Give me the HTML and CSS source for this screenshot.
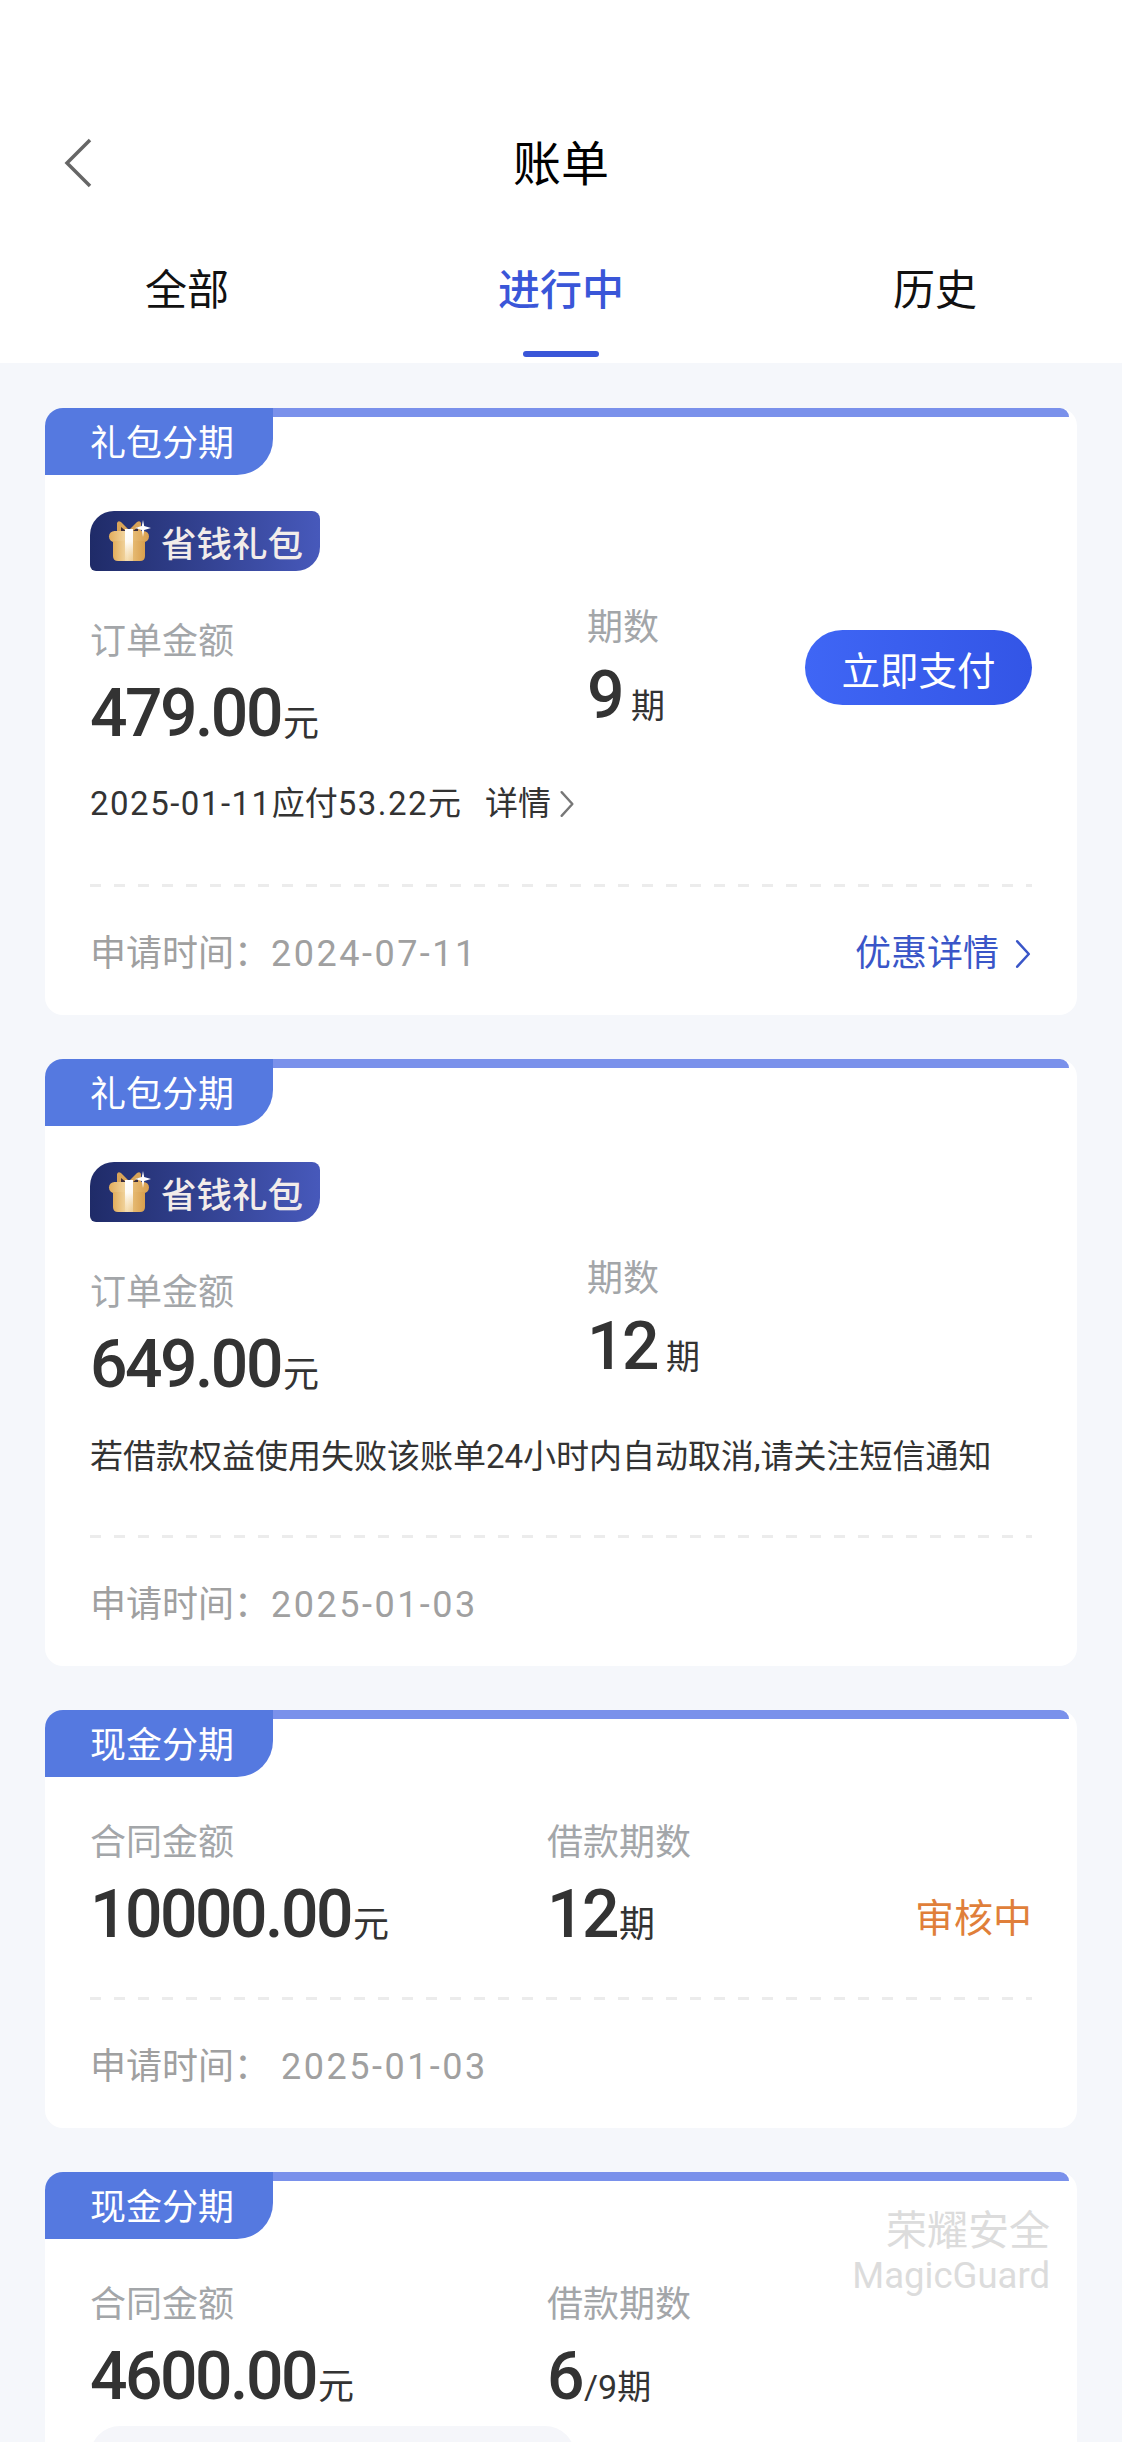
FILE: index.html
```html
<!DOCTYPE html>
<html lang="zh-CN">
<head>
<meta charset="utf-8">
<title>账单</title>
<link rel="stylesheet" href="styles.css">
</head>
<body>
<svg class="defs" width="0" height="0" aria-hidden="true">
  <defs>
    <linearGradient id="boxg" x1="0" y1="0" x2="1" y2="0">
      <stop offset="0" stop-color="#e2ad5c"/><stop offset=".45" stop-color="#f3d9a6"/><stop offset=".6" stop-color="#e6bb74"/><stop offset="1" stop-color="#d99f4d"/>
    </linearGradient>
    <linearGradient id="ribbon" x1="0" y1="0" x2="0" y2="1">
      <stop offset="0" stop-color="#fff"/><stop offset=".4" stop-color="#fff" stop-opacity=".9"/><stop offset="1" stop-color="#f6dfb4" stop-opacity=".5"/>
    </linearGradient>
    <symbol id="gift" viewBox="0 0 44 44">
      <path d="M9 14 L9 4 Q10 1 13 3 L21 11 L29 3 Q32 1 33 4 L33 14 Z" fill="#d9a458"/>
      <path d="M13 8 L18 12 L13 13 Z M30 8 L25 12 L30 13 Z" fill="#3a2c3c"/>
      <rect x="1" y="12" width="40" height="11" rx="5.500" fill="url(#boxg)"/>
      <path d="M5 22 H37 V37 Q37 42 32 42 H10 Q5 42 5 37 Z" fill="url(#boxg)"/>
      <rect x="17" y="10" width="8" height="32" fill="url(#ribbon)"/>
      <path d="M35 1 L36.200 7 L43 9 L36.200 11 L35 18 L33.800 11 L27 9 L33.800 7 Z" fill="#fff"/>
    </symbol>
    <symbol id="chev" viewBox="0 0 14 26">
      <path d="M2 2 L12 13 L2 24" fill="none" stroke="currentColor" stroke-width="2.200" stroke-linecap="round" stroke-linejoin="round"/>
    </symbol>
  </defs>
</svg>

<header class="top">
  <div class="navbar">
    <svg class="back" viewBox="0 0 30 50"><path d="M27 2 L4 25 L27 48" fill="none" stroke="#666" stroke-width="3.500"/></svg>
    <h1 class="title">账单</h1>
  </div>
  <nav class="tabs">
    <div class="tab">全部</div>
    <div class="tab active">进行中</div>
    <div class="tab">历史</div>
  </nav>
</header>

<main class="list">
  <section class="card">
    <div class="card-head"><div class="tag">礼包分期</div><div class="bar"></div></div>
    <div class="card-body">
      <div class="badge"><svg class="gift"><use href="#gift"/></svg><span>省钱礼包</span></div>
      <div class="stats stats-gift">
        <div class="col col-a">
          <div class="label">订单金额</div>
          <div class="amount">479.00<small>元</small></div>
        </div>
        <div class="col col-b">
          <div class="label">期数</div>
          <div class="term">9<small class="gap">期</small></div>
        </div>
        <button class="pay">立即支付</button>
      </div>
      <div class="note"><span class="n">2025-01-11</span>应付<span class="n">53.22</span>元<span class="detail">详情<svg class="chev-s"><use href="#chev"/></svg></span></div>
      <div class="dash"></div>
      <div class="foot">
        <div class="apply">申请时间：<span class="n date">2024-07-11</span></div>
        <div class="promo">优惠详情<svg class="chev-m"><use href="#chev"/></svg></div>
      </div>
    </div>
  </section>

  <section class="card">
    <div class="card-head"><div class="tag">礼包分期</div><div class="bar"></div></div>
    <div class="card-body">
      <div class="badge"><svg class="gift"><use href="#gift"/></svg><span>省钱礼包</span></div>
      <div class="stats stats-gift">
        <div class="col col-a">
          <div class="label">订单金额</div>
          <div class="amount">649.00<small>元</small></div>
        </div>
        <div class="col col-b">
          <div class="label">期数</div>
          <div class="term">12<small class="gap">期</small></div>
        </div>
      </div>
      <div class="note note-long">若借款权益使用失败该账单24小时内自动取消,请关注短信通知</div>
      <div class="dash"></div>
      <div class="foot">
        <div class="apply">申请时间：<span class="n date">2025-01-03</span></div>
      </div>
    </div>
  </section>

  <section class="card">
    <div class="card-head"><div class="tag">现金分期</div><div class="bar"></div></div>
    <div class="card-body">
      <div class="stats stats-cash">
        <div class="col col-c">
          <div class="label">合同金额</div>
          <div class="amount">10000.00<small>元</small></div>
        </div>
        <div class="col">
          <div class="label">借款期数</div>
          <div class="amount">12<small>期</small></div>
        </div>
        <div class="status">审核中</div>
      </div>
      <div class="dash dash-cash"></div>
      <div class="foot">
        <div class="apply">申请时间：<span class="n date wide">2025-01-03</span></div>
      </div>
    </div>
  </section>

  <section class="card">
    <div class="card-head"><div class="tag">现金分期</div><div class="bar"></div></div>
    <div class="card-body">
      <div class="stats stats-cash">
        <div class="col col-c">
          <div class="label">合同金额</div>
          <div class="amount">4600.00<small>元</small></div>
        </div>
        <div class="col">
          <div class="label">借款期数</div>
          <div class="amount">6<small class="frac">/9期</small></div>
        </div>
      </div>
      <div class="pill"></div>
    </div>
    <div class="watermark"><div class="wm-cn">荣耀安全</div><div class="wm-en">MagicGuard</div></div>
  </section>
</main>
</body>
</html>
```

FILE: styles.css
```css
* { box-sizing: border-box; }
html, body { margin: 0; padding: 0; }
body {
  width: 1122px;
  height: 2442px;
  overflow: hidden;
  background: #f5f7fb;
  font-family: "Roboto", "Noto Sans CJK SC", sans-serif;
  color: #333;
}
.defs { position: absolute; }

.top { background: #fff; height: 363px; padding-top: 112px; }
.navbar { position: relative; height: 100px; display: flex; align-items: center; justify-content: center; }
.back { position: absolute; left: 63px; top: 26px; width: 30px; height: 50px; }
.title { margin: 0; padding-top: 6px; font-size: 48px; font-weight: 400; color: #000; line-height: 100px; }
.tabs { display: grid; grid-template-columns: repeat(3, 1fr); height: 151px; }
.tab { position: relative; height: 151px; text-align: center; font-size: 42px; color: #111; line-height: 158px; }
.tab.active { color: #3a56d8; font-weight: 500; }
.tab.active::after {
  content: "";
  position: absolute;
  left: 50%;
  bottom: 6px;
  width: 76px;
  height: 6px;
  margin-left: -38px;
  border-radius: 3px;
  background: #3a56d8;
}

.list { padding: 45px 45px 0; display: flex; flex-direction: column; gap: 44px; }
.card { position: relative; background: #fff; border-radius: 18px; flex: none; }
.card-head { display: flex; height: 67px; padding-right: 8px; }
.tag {
  width: 228px;
  height: 67px;
  background: #5579e0;
  color: #fff;
  font-size: 36px;
  line-height: 72px;
  padding-left: 45px;
  border-radius: 18px 0 36px 0;
}
.bar { flex: 1; height: 9px; background: #7a91eb; border-radius: 0 9px 0 0; }
.card-body { padding: 0 45px 0; }

.badge {
  margin-top: 36px;
  width: 230px;
  height: 60px;
  display: flex;
  align-items: center;
  border-radius: 24px 8px 24px 6px;
  background: linear-gradient(90deg, #1f2b68, #4759bb);
  color: #f2ecea;
  font-size: 35.500px;
  font-weight: 500;
  padding-left: 18px;
}
.gift { width: 44px; height: 44px; margin-right: 9px; flex: none; }

.stats { display: flex; align-items: flex-start; }
.stats-gift { margin-top: 18px; height: 170px; position: relative; }
.stats-cash { margin-top: 41px; height: 143px; }
.col-a { width: 497px; padding-top: 28px; }
.col-c { width: 457px; }
.col-b { width: 218px; padding-top: 14px; }
.label { font-size: 36px; color: #a3a6a9; line-height: 50px; }
.amount, .term {
  font-size: 66px;
  font-weight: 500;
  color: #333;
  letter-spacing: -2.500px;
}
.amount { line-height: 86px; margin-top: 4px; }
.term { line-height: 80px; margin-top: 3px; }
.amount small, .term small { font-weight: 400; letter-spacing: 0; }
.amount small { font-size: 36px; margin-left: 2px; }
.amount .frac { font-size: 34px; }
.term small { font-size: 34px; }
.term .gap { margin-left: 9px; }
.pay {
  width: 227px;
  height: 75px;
  margin-top: 41px;
  border: 0;
  border-radius: 38px;
  background: linear-gradient(90deg, #3f66f5, #3355e6);
  color: #fff;
  font: inherit;
  font-size: 38.500px;
}
.status { margin-left: auto; margin-top: 69px; font-size: 39px; color: #e07f3a; }

.note { font-size: 33px; color: #333; line-height: 50px; margin-top: 20px; }
.note-long { padding-top: 2px; height: 50px; }
.n { letter-spacing: 1.500px; }
.detail { margin-left: 24px; display: inline-flex; align-items: center; }
.chev-s { width: 16px; height: 28px; margin-left: 8px; color: #777; }
.dash { height: 3px; margin-top: 55px; background: repeating-linear-gradient(90deg, #ececec 0 11px, transparent 11px 24px); }
.dash-cash { margin-top: 36px; }
.foot { height: 128px; display: flex; justify-content: space-between; align-items: flex-start; padding-top: 42px; }
.apply { font-size: 36px; color: #a0a0a0; line-height: 50px; white-space: nowrap; }
.date { margin-left: 1px; font-size: 36px; letter-spacing: 2.500px; }
.date.wide { margin-left: 11px; }
.promo { font-size: 36px; color: #3a56c8; line-height: 50px; display: flex; align-items: center; }
.chev-m { width: 18px; height: 30px; margin-left: 15px; }

.pill { width: 485px; height: 60px; margin-top: 3px; border-radius: 30px; background: #f5f6fa; }
.watermark { position: absolute; right: 27px; top: 34px; text-align: right; color: #dcdcdc; }
.wm-cn { font-size: 41px; line-height: 50px; }
.wm-en { font-size: 36.500px; line-height: 40px; }
```
